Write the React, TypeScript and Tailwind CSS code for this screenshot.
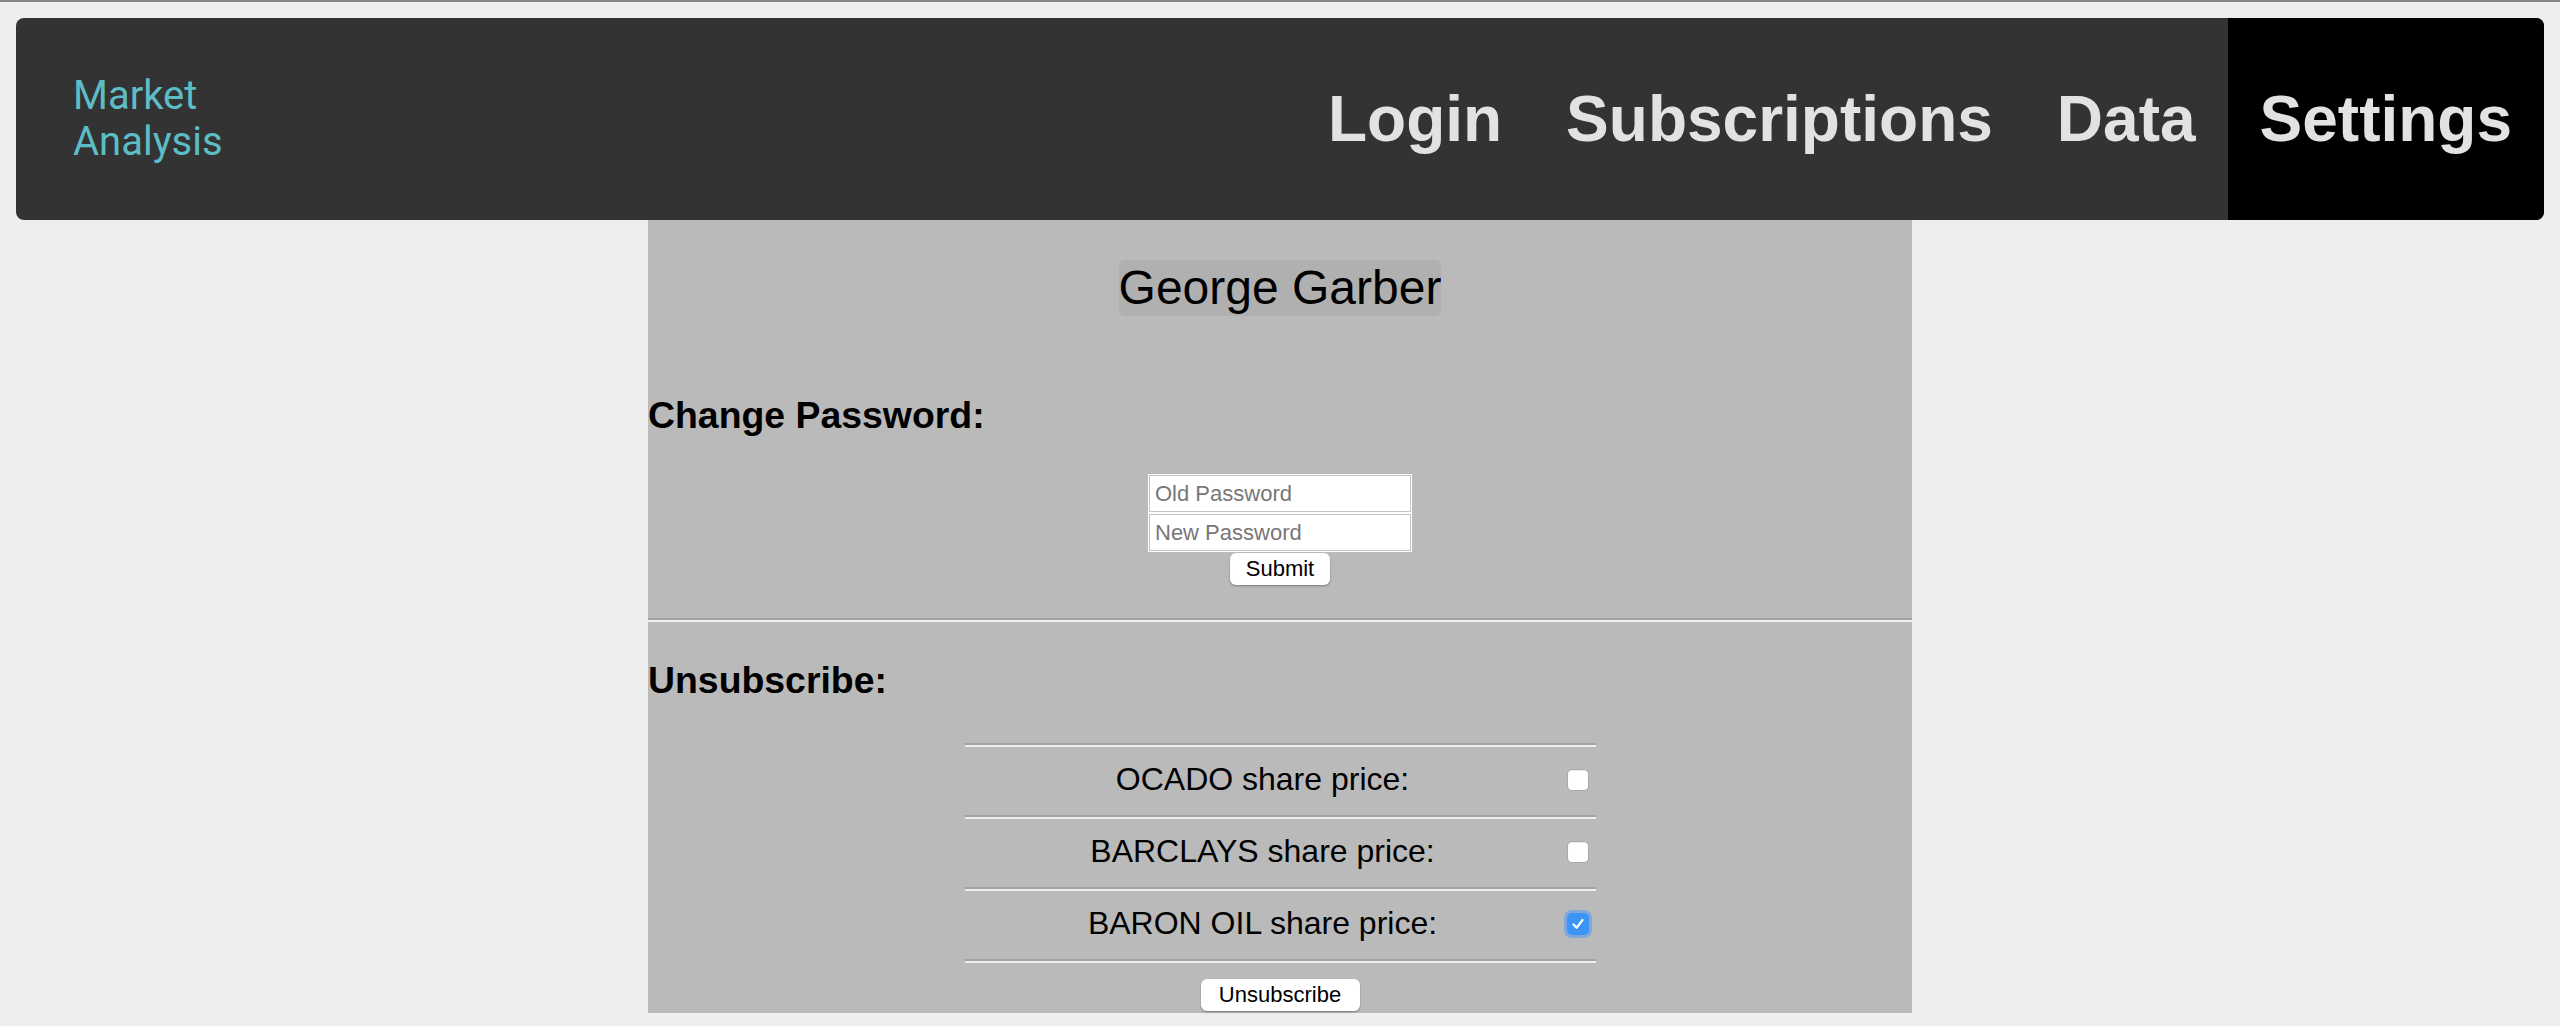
const navItems = ["Login", "Subscriptions", "Data", "Settings"];

const shares = [
  { name: "OCADO share price:", checked: false },
  { name: "BARCLAYS share price:", checked: false },
  { name: "BARON OIL share price:", checked: true },
];

const Rule = ({ className = "" }: { className?: string }) => (
  <div className={`h-[4px] border-t-2 border-b-2 border-t-[#a2a2a2] border-b-[#efefef] ${className}`} />
);

const Checkbox = ({ checked }: { checked: boolean }) =>
  checked ? (
    <div className="w-[22px] h-[22px] rounded-[5px] bg-[#3a95f6] flex items-center justify-center shadow-[0_0_0_3px_rgba(80,150,245,0.55)]">
      <svg width="14" height="14" viewBox="0 0 14 14" fill="none">
        <path d="M2.5 7.5 L5.6 10.8 L11.5 3" stroke="white" strokeWidth="2.2" strokeLinecap="round" strokeLinejoin="round" />
      </svg>
    </div>
  ) : (
    <div className="w-[22px] h-[22px] rounded-[5px] bg-white border border-[#a8a8a8] shadow-[inset_0_1px_1px_rgba(0,0,0,0.08)]" />
  );

const App = () => {
  return (
    <div className="min-h-screen bg-[#eeeeee] font-['Liberation_Sans',Arial,sans-serif]">
      <div className="h-[2px] bg-[#878787]" />
      <div className="mx-4 mt-4 h-[202px] bg-[#333333] rounded-[8px] overflow-hidden flex items-stretch justify-between">
        <div className="flex items-center pl-[57px]">
          <div className="font-['Roboto',sans-serif] text-[40px] leading-[46px] text-[#5cbdc7]">
            Market
            <br />
            Analysis
          </div>
        </div>
        <div className="flex items-stretch">
          {navItems.map((item) => (
            <div
              key={item}
              className={`flex items-center px-8 text-[64px] font-bold text-[#e2e2e2] ${
                item === "Settings" ? "bg-black" : ""
              }`}
            >
              {item}
            </div>
          ))}
        </div>
      </div>

      <div className="w-[1264px] mx-auto bg-[#bababa] pt-[40px] pb-[2px] text-black">
        <div className="flex justify-center">
          <h1 className="bg-[#b0b0b0] rounded-[6px] text-[48px] leading-[56px]">George Garber</h1>
        </div>

        <h3 className="mt-[78px] text-[37.4px] font-bold leading-[42px]">Change Password:</h3>
        <div className="mt-[39px] flex flex-col items-center">
          <input
            placeholder="Old Password"
            className="w-[262px] h-[37px] bg-white border border-[#c4c4c4] ring-1 ring-white px-[5px] text-[22px] placeholder:text-[#777] outline-none"
          />
          <input
            placeholder="New Password"
            className="mt-[2px] w-[262px] h-[37px] bg-white border border-[#c4c4c4] ring-1 ring-white px-[5px] text-[22px] placeholder:text-[#777] outline-none"
          />
          <button className="mt-[2px] w-[100px] h-[32px] bg-white rounded-[6px] shadow-[0_1px_2px_rgba(0,0,0,0.35)] text-[22px] leading-none">
            Submit
          </button>
        </div>

        <Rule className="mt-[33px]" />

        <h3 className="mt-[37px] text-[37.4px] font-bold leading-[42px]">Unsubscribe:</h3>
        <div className="mt-[42px] w-[631px] mx-auto">
          <Rule />
          {shares.map((s) => (
            <div key={s.name}>
              <div className="h-[68px] flex items-center pb-[3px]">
                <div className="flex-1 text-center text-[32px] leading-[37px]">{s.name}</div>
                <div className="w-[35px] flex justify-center">
                  <Checkbox checked={s.checked} />
                </div>
              </div>
              <Rule />
            </div>
          ))}
        </div>
        <div className="mt-[16px] flex justify-center">
          <button className="w-[159px] h-[32px] bg-white rounded-[6px] shadow-[0_1px_2px_rgba(0,0,0,0.35)] text-[22px] leading-none">
            Unsubscribe
          </button>
        </div>
      </div>
    </div>
  );
};

export default App;
